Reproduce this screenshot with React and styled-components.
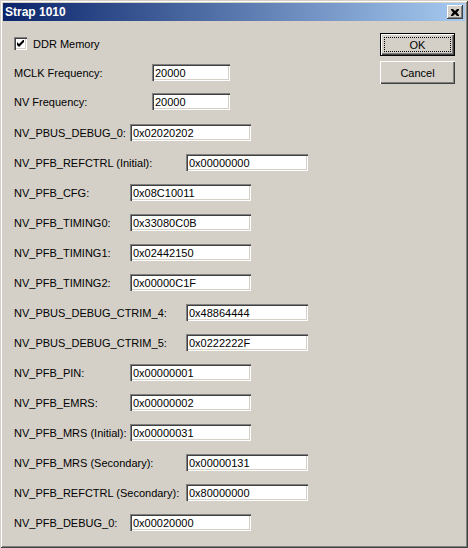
import React from 'react';
import styled, { createGlobalStyle } from 'styled-components';

const GlobalStyle = createGlobalStyle`
  html, body {
    margin: 0;
    padding: 0;
    background: #d4d0c8;
  }
  * {
    box-sizing: border-box;
  }
`;

const Window = styled.div`
  width: 468px;
  height: 548px;
  padding: 3px;
  background: #d4d0c8;
  box-shadow: inset 1px 1px #d4d0c8, inset -1px -1px #404040,
    inset 2px 2px #ffffff, inset -2px -2px #808080;
  font-family: 'Liberation Sans', Arial, sans-serif;
  font-size: 11px;
  color: #000;
  display: flex;
  flex-direction: column;
`;

const TitleBar = styled.div`
  height: 18px;
  display: flex;
  align-items: center;
  justify-content: space-between;
  padding: 0 2px;
  background: linear-gradient(to right, #0a246a, #a6caf0);
`;

const Title = styled.span`
  color: #fff;
  font-weight: bold;
  font-size: 12px;
`;

const CloseButton = styled.div`
  width: 16px;
  height: 14px;
  background: #d4d0c8;
  box-shadow: inset -1px -1px #404040, inset 1px 1px #ffffff,
    inset -2px -2px #808080;
  display: flex;
  align-items: center;
  justify-content: center;
`;

const Body = styled.div`
  flex: 1;
  display: flex;
  align-items: flex-start;
  justify-content: space-between;
  padding: 12px 10px 0 11px;
`;

const Fields = styled.div`
  display: flex;
  flex-direction: column;
  padding-top: 2px;
`;

const Row = styled.div`
  height: 17px;
  display: flex;
  align-items: center;
  margin-top: ${(p) => (p.$gap === undefined ? 13 : p.$gap)}px;
`;

const Label = styled.span`
  width: ${(p) => p.$width}px;
  white-space: nowrap;
`;

const Edit = styled.input`
  width: ${(p) => p.$width}px;
  height: 17px;
  border: none;
  outline: none;
  margin: 0;
  padding: 0 0 0 3px;
  background: #fff;
  font-family: 'Liberation Sans', Arial, sans-serif;
  font-size: 11px;
  color: #000;
  box-shadow: inset 1px 1px #808080, inset 2px 2px #404040,
    inset -1px -1px #ffffff, inset -2px -2px #d4d0c8;
`;

const CheckBox = styled.div`
  width: 13px;
  height: 13px;
  margin-right: 6px;
  background: #fff;
  box-shadow: inset 1px 1px #808080, inset 2px 2px #404040,
    inset -1px -1px #ffffff, inset -2px -2px #d4d0c8;
  display: flex;
  align-items: center;
  justify-content: center;
`;

const Buttons = styled.div`
  display: flex;
  flex-direction: column;
  gap: 5px;
`;

const Button = styled.div`
  width: 75px;
  height: 23px;
  display: flex;
  align-items: center;
  justify-content: center;
  background: #d4d0c8;
  position: relative;
  box-shadow: ${(p) =>
    p.$default
      ? 'inset 1px 1px #000, inset -1px -1px #000, inset 2px 2px #fff, inset -2px -2px #404040, inset -3px -3px #808080'
      : 'inset 1px 1px #fff, inset -1px -1px #404040, inset -2px -2px #808080'};
`;

const Focus = styled.span`
  position: absolute;
  left: 4px;
  top: 4px;
  right: 4px;
  bottom: 4px;
  border: 1px dotted #000;
`;

const fields = [
  { label: 'MCLK Frequency:', value: '20000', at: 138, w: 78, gap: 12 },
  { label: 'NV Frequency:', value: '20000', at: 138, w: 78, gap: 12 },
  { label: 'NV_PBUS_DEBUG_0:', value: '0x02020202', at: 116, w: 121, gap: 14 },
  { label: 'NV_PFB_REFCTRL (Initial):', value: '0x00000000', at: 172, w: 122 },
  { label: 'NV_PFB_CFG:', value: '0x08C10011', at: 116, w: 121 },
  { label: 'NV_PFB_TIMING0:', value: '0x33080C0B', at: 116, w: 121 },
  { label: 'NV_PFB_TIMING1:', value: '0x02442150', at: 116, w: 121 },
  { label: 'NV_PFB_TIMING2:', value: '0x00000C1F', at: 116, w: 121 },
  { label: 'NV_PBUS_DEBUG_CTRIM_4:', value: '0x48864444', at: 172, w: 122 },
  { label: 'NV_PBUS_DEBUG_CTRIM_5:', value: '0x0222222F', at: 172, w: 122 },
  { label: 'NV_PFB_PIN:', value: '0x00000001', at: 116, w: 121 },
  { label: 'NV_PFB_EMRS:', value: '0x00000002', at: 116, w: 121 },
  { label: 'NV_PFB_MRS (Initial):', value: '0x00000031', at: 116, w: 121 },
  { label: 'NV_PFB_MRS (Secondary):', value: '0x00000131', at: 172, w: 122 },
  { label: 'NV_PFB_REFCTRL (Secondary):', value: '0x80000000', at: 172, w: 122 },
  { label: 'NV_PFB_DEBUG_0:', value: '0x00020000', at: 116, w: 121 },
];

export default function App() {
  return (
    <>
      <GlobalStyle />
      <Window>
        <TitleBar>
          <Title>Strap 1010</Title>
          <CloseButton>
            <svg width="8" height="7" viewBox="0 0 8 7">
              <path d="M0 0h2l2 2 2-2h2v1L6 3.5 8 6v1H6L4 5 2 7H0V6l2-2.5L0 1z" fill="#000" />
            </svg>
          </CloseButton>
        </TitleBar>
        <Body>
          <Fields>
            <Row $gap={0}>
              <CheckBox>
                <svg width="7" height="7" viewBox="0 0 7 7">
                  <path d="M0 2v3l2 2 5-5V-1L2 4z" fill="#000" />
                </svg>
              </CheckBox>
              <span>DDR Memory</span>
            </Row>
            {fields.map((f) => (
              <Row key={f.label} $gap={f.gap}>
                <Label $width={f.at}>{f.label}</Label>
                <Edit $width={f.w} defaultValue={f.value} readOnly />
              </Row>
            ))}
          </Fields>
          <Buttons>
            <Button $default>
              <Focus />
              OK
            </Button>
            <Button>Cancel</Button>
          </Buttons>
        </Body>
      </Window>
    </>
  );
}
